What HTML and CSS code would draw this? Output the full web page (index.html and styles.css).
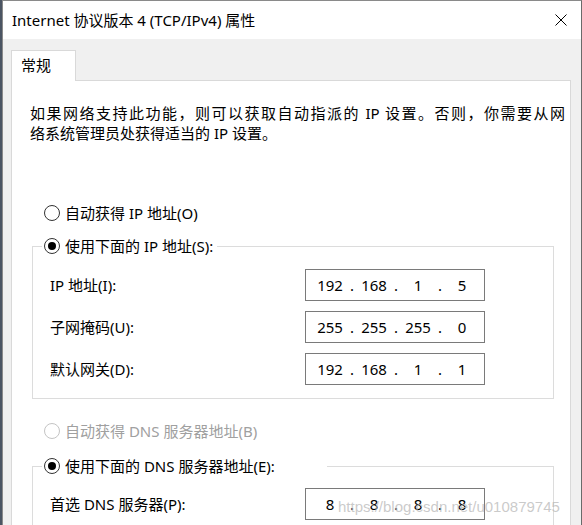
FILE: index.html
```html
<!DOCTYPE html>
<html lang="zh-CN">
<head>
    <meta charset="UTF-8">
    <title>Internet 协议版本 4 (TCP/IPv4) 属性</title>
    <link rel="stylesheet" href="styles.css">
</head>
<body>
    <div class="window">
        <div class="titlebar">
            <span class="title">Internet 协议版本 4 (TCP/IPv4) 属性</span>
            <svg class="close" width="12" height="12" viewBox="0 0 12 12">
                <path d="M0.5 0.5L11.5 11.5M11.5 0.5L0.5 11.5" stroke="#000" stroke-width="1" fill="none"/>
            </svg>
        </div>
        <div class="content">
            <div class="tabs">
                <div class="tab">常规</div>
            </div>
            <div class="panel">
                <p class="intro">
                    <span class="intro-line full">如果网络支持此功能，则可以获取自动指派的 IP 设置。否则，你需要从网</span>
                    <span class="intro-line">络系统管理员处获得适当的 IP 设置。</span>
                </p>

                <div class="radio"><span class="bullet"></span>自动获得 IP 地址(O)</div>
                <fieldset class="group">
                    <legend class="radio"><span class="bullet checked"></span>使用下面的 IP 地址(S):</legend>
                    <div class="field">
                        <span class="field-label">IP 地址(I):</span>
                        <div class="ip-box"><span class="octet">192</span><span class="sep">.</span><span class="octet">168</span><span class="sep">.</span><span class="octet">1</span><span class="sep">.</span><span class="octet">5</span></div>
                    </div>
                    <div class="field">
                        <span class="field-label">子网掩码(U):</span>
                        <div class="ip-box"><span class="octet">255</span><span class="sep">.</span><span class="octet">255</span><span class="sep">.</span><span class="octet">255</span><span class="sep">.</span><span class="octet">0</span></div>
                    </div>
                    <div class="field">
                        <span class="field-label">默认网关(D):</span>
                        <div class="ip-box"><span class="octet">192</span><span class="sep">.</span><span class="octet">168</span><span class="sep">.</span><span class="octet">1</span><span class="sep">.</span><span class="octet">1</span></div>
                    </div>
                </fieldset>

                <div class="radio disabled"><span class="bullet"></span>自动获得 DNS 服务器地址(B)</div>
                <fieldset class="group dns">
                    <legend class="radio"><span class="bullet checked"></span>使用下面的 DNS 服务器地址(E):</legend>
                    <div class="field">
                        <span class="field-label">首选 DNS 服务器(P):</span>
                        <div class="ip-box"><span class="octet">8</span><span class="sep">.</span><span class="octet">8</span><span class="sep">.</span><span class="octet">8</span><span class="sep">.</span><span class="octet">8</span></div>
                    </div>
                </fieldset>
            </div>
        </div>
        <div class="watermark">https://blog.csdn.net/u010879745</div>
    </div>
</body>
</html>
```

FILE: styles.css
```css
body {
    margin: 0;
    height: 525px;
    overflow: hidden;
    background: #4b5563;
    font-family: "Noto Sans", "Noto Sans CJK SC", sans-serif;
    font-size: 15px;
    color: #000;
}
.window {
    position: relative;
    margin-left: 2px;
    height: 600px;
    border: 1px solid #8a8a8a;
    border-right-color: #6a6a6a;
    background: #f0f0f0;
}
.titlebar {
    height: 38px;
    background: #fff;
    display: flex;
    align-items: center;
    justify-content: space-between;
    padding: 0 14px 0 9px;
}
.title {
    line-height: 20px;
}
.close {
    display: block;
}
.content {
    padding: 11px 10px 0 8px;
}
.tabs {
    display: flex;
}
.tab {
    position: relative;
    z-index: 1;
    width: 54px;
    height: 30px;
    padding-left: 9px;
    line-height: 29px;
    background: #fff;
    border: 1px solid #d9d9d9;
    border-bottom: none;
}
.panel {
    margin-top: -1px;
    background: #fff;
    border: 1px solid #d9d9d9;
    padding: 22px 0 0 18px;
    height: 520px;
}
.intro {
    margin: 0 5px 0 0;
    line-height: 20px;
}
.intro-line {
    display: block;
    white-space: nowrap;
}
/* the wrapped first line fills the whole width of the static text */
.intro-line.full {
    text-align: justify;
    text-align-last: justify;
}
.radio {
    display: flex;
    align-items: center;
    height: 20px;
    line-height: 20px;
    padding-left: 14px;
    margin-top: 60px;
}
.radio.disabled {
    color: #a0a0a0;
    margin-top: 22px;
}
.bullet {
    box-sizing: border-box;
    width: 16px;
    height: 16px;
    margin-right: 5px;
    border: 1px solid #333;
    border-radius: 50%;
    background: #fff;
    display: flex;
    align-items: center;
    justify-content: center;
}
.disabled .bullet {
    border-color: #c4c4c4;
}
.bullet.checked::after {
    content: '';
    width: 8px;
    height: 8px;
    border-radius: 50%;
    background: #000;
}
.group {
    margin: 13px 16px 0 2px;
    padding: 13px 0 13px 9px;
    border: 1px solid #dcdcdc;
}
.group legend.radio {
    margin: 0;
    padding: 0 4px 0 2px;
    background: #fff;
}
/* the DNS radio control is wider than its caption */
.group.dns legend.radio {
    padding-right: 52px;
}
.group.dns {
    margin-top: 15px;
    padding-top: 12px;
    padding-bottom: 40px;
}
.field {
    display: flex;
    align-items: center;
    height: 32px;
    padding-left: 8px;
}
.field + .field {
    margin-top: 10px;
}
.field-label {
    width: 255px;
    line-height: 20px;
}
.ip-box {
    box-sizing: border-box;
    width: 180px;
    height: 32px;
    border: 1px solid #7a7a7a;
    padding-left: 8px;
    display: flex;
    align-items: center;
    line-height: 20px;
}
.octet {
    width: 32px;
    text-align: center;
}
.sep {
    width: 12px;
    text-align: center;
}
.watermark {
    position: absolute;
    left: 335px;
    top: 496px;
    font-family: "Liberation Sans", Arial, sans-serif;
    font-size: 15px;
    line-height: 20px;
    color: rgba(185, 185, 185, 0.75);
    white-space: nowrap;
}
```
